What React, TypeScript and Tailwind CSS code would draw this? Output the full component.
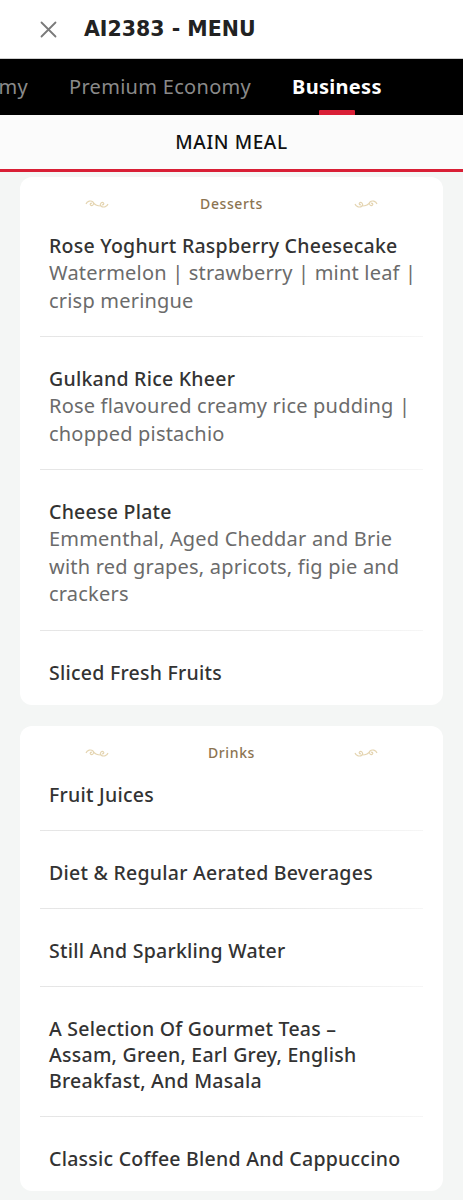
import type { ReactNode } from "react";

const body = { fontFamily: "'Noto Sans', 'Open Sans', sans-serif" };

type Item = { title: string; desc?: string };

const desserts: Item[] = [
  { title: "Rose Yoghurt Raspberry Cheesecake", desc: "Watermelon | strawberry | mint leaf | crisp meringue" },
  { title: "Gulkand Rice Kheer", desc: "Rose flavoured creamy rice pudding | chopped pistachio" },
  { title: "Cheese Plate", desc: "Emmenthal, Aged Cheddar and Brie with red grapes, apricots, fig pie and crackers" },
  { title: "Sliced Fresh Fruits" },
];

const drinks: Item[] = [
  { title: "Fruit Juices" },
  { title: "Diet & Regular Aerated Beverages" },
  { title: "Still And Sparkling Water" },
  { title: "A Selection Of Gourmet Teas –\nAssam, Green, Earl Grey, English Breakfast, And Masala" },
  { title: "Classic Coffee Blend And Cappuccino" },
];

function Ornament({ flip }: { flip?: boolean }) {
  const id = flip ? "orn-r" : "orn-l";
  return (
    <svg width="120" height="12" viewBox="0 0 120 12" className={flip ? "-scale-x-100" : ""}>
      <defs>
        <linearGradient id={id} x1="0" x2="1" y1="0" y2="0">
          <stop offset="0" stopColor="#f1e9d6" stopOpacity="0" />
          <stop offset="0.3" stopColor="#e7d9b9" />
          <stop offset="0.7" stopColor="#e7d9b9" />
          <stop offset="1" stopColor="#f1e9d6" stopOpacity="0" />
        </linearGradient>
      </defs>
      <line x1="0" y1="6" x2="49" y2="6" stroke={`url(#${id})`} strokeWidth="1.3" />
      <line x1="71" y1="6" x2="120" y2="6" stroke={`url(#${id})`} strokeWidth="1.3" />
      <path
        d="M49 6 C50 3 54 2 56 4 C58 6 55 8.5 53.5 7 C52.5 6 54 4.5 55 5.5 M56 4 C58 8 62 8 64 8 M71 6 C70 9 66 10 64 8 C62 6 65 3.5 66.5 5 C67.5 6 66 7.5 65 6.5"
        fill="none"
        stroke="#e4d4b0"
        strokeWidth="1.1"
      />
    </svg>
  );
}

function SectionCard({ label, children }: { label: string; children: ReactNode }) {
  return (
    <section className="mx-5 rounded-xl bg-white pt-[21px]">
      <div className="flex items-center justify-between px-[17px]">
        <Ornament />
        <span className="text-[14px] font-medium leading-[12px] tracking-[0.6px] text-[#8c7451]" style={body}>
          {label}
        </span>
        <Ornament flip />
      </div>
      <div className="mt-[9px]">{children}</div>
    </section>
  );
}

function MenuItem({ item, last }: { item: Item; last?: boolean }) {
  return (
    <div className="px-5">
      <div className={`pl-[9px] pt-[14px] ${last ? "pb-[19px]" : "pb-[22px]"}`}>
        <p
          className="whitespace-pre-line text-[19.5px] font-medium leading-[26px] tracking-[0.25px] text-[#333333]"
          style={body}
        >
          {item.title}
        </p>
        {item.desc && (
          <p className="text-[20px] leading-[27.5px] tracking-[0.2px] text-[#6b6b6b]" style={body}>
            {item.desc}
          </p>
        )}
      </div>
      {!last && <div className="h-px bg-gradient-to-r from-[#e6e6e6] via-[#e4e4e4] to-[#f6f6f6]" />}
      {!last && <div className="h-[15px]" />}
    </div>
  );
}

export default function App() {
  return (
    <div className="min-h-[1200px] w-[463px] overflow-hidden bg-[#f4f6f5]" style={body}>
      <header className="flex h-[58px] items-center bg-white pl-[40px]">
        <svg width="17" height="17" viewBox="0 0 17 17">
          <path d="M1.5 1.5 L15.5 15.5 M15.5 1.5 L1.5 15.5" stroke="#7a7a7a" strokeWidth="1.8" strokeLinecap="round" />
        </svg>
        <h1
          className="ml-[27px] text-[20.5px] font-bold text-[#222222]"
          style={{ fontFamily: "'DejaVu Sans', 'Liberation Sans', sans-serif" }}
        >
          AI2383 - MENU
        </h1>
      </header>

      <nav className="flex h-[57px] items-stretch border-t border-[#cfcfcf] bg-black text-[20px] tracking-[0.3px]">
        <div className="flex w-[28px] justify-end overflow-hidden">
          <span className="flex items-center whitespace-nowrap text-[#8a8a8a]">Economy</span>
        </div>
        <div className="ml-[41px] flex items-center whitespace-nowrap text-[#8a8a8a]">Premium Economy</div>
        <div className="relative ml-[41px] flex items-center whitespace-nowrap font-bold text-white">
          Business
          <span className="absolute bottom-0 left-1/2 h-[5px] w-[36px] -translate-x-1/2 rounded-t-[1px] bg-[#d91f36]" />
        </div>
      </nav>

      <div className="flex h-[54px] items-center justify-center bg-[#fbfbfb] text-[19px] font-medium tracking-[0.6px] text-[#111111]">
        MAIN MEAL
      </div>
      <div className="h-[3px] bg-[#d91f36]" />

      <div className="flex flex-col gap-[21px] pt-[5px]">
        <SectionCard label="Desserts">
          {desserts.map((d, i) => (
            <MenuItem key={d.title} item={d} last={i === desserts.length - 1} />
          ))}
        </SectionCard>
        <SectionCard label="Drinks">
          {drinks.map((d, i) => (
            <MenuItem key={d.title} item={d} last={i === drinks.length - 1} />
          ))}
        </SectionCard>
        <section className="mx-5 h-[200px] rounded-xl bg-white" />
      </div>
    </div>
  );
}
